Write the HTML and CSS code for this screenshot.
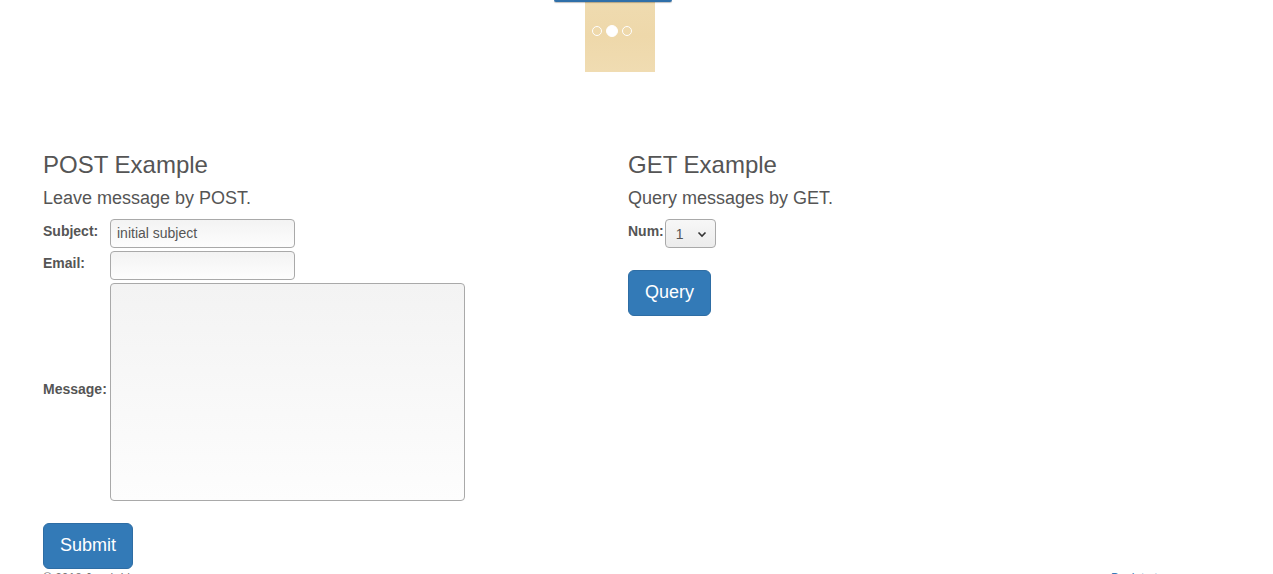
FILE: index.html
```html
<!DOCTYPE html>
<html>
<head>
<meta charset="utf-8">
<link rel="stylesheet" href="styles.css">
</head>
<body>
<div class="hero">
  <div class="hero-btn"></div>
  <div class="slide">
    <ol class="dots">
      <li class="dot"></li>
      <li class="dot active"></li>
      <li class="dot"></li>
    </ol>
  </div>
</div>
<div class="container">
  <div class="col">
    <h3 class="title">POST Example</h3>
    <p class="lead">Leave message by POST.</p>
    <form class="form-grid">
      <label class="lbl">Subject:</label>
      <input class="field field-sm" type="text" value="initial subject">
      <label class="lbl">Email:</label>
      <input class="field field-sm" type="text">
      <label class="lbl">Message:</label>
      <textarea class="field field-area"></textarea>
    </form>
    <button class="btn">Submit</button>
  </div>
  <div class="col">
    <h3 class="title">GET Example</h3>
    <p class="lead">Query messages by GET.</p>
    <div class="num-row">
      <label class="lbl">Num:</label>
      <div class="select-wrap">
        <select class="select"><option>1</option><option>2</option><option>3</option></select>
        <svg class="chev" width="10" height="7" viewBox="0 0 10 7"><path d="M1.5 1.5 L5 5 L8.5 1.5" fill="none" stroke="#333" stroke-width="1.6"/></svg>
      </div>
    </div>
    <button class="btn btn-query">Query</button>
  </div>
</div>
<footer class="footer">
  <span class="copy">© 2018 Jacob Lin</span>
  <a class="top-link">Back to top</a>
</footer>
</body>
</html>
```
FILE: styles.css
```css
* { box-sizing: border-box; }
html, body { margin: 0; padding: 0; }
body {
  font-family: "Liberation Sans", Arial, sans-serif;
  font-size: 14px;
  line-height: 1.42857;
  color: #555;
  background: #fff;
  overflow: hidden;
}
.hero {
  position: relative;
  height: 72px;
  padding-left: 585px;
}
.hero-btn {
  position: absolute;
  left: 554px;
  top: 0;
  width: 118px;
  height: 2px;
  background: #2f6fa9;
  border-radius: 0 0 3px 3px;
  box-shadow: 0 1px 1px rgba(0,0,0,0.25);
  z-index: 2;
}
.slide {
  position: relative;
  width: 70px;
  height: 72px;
  background: linear-gradient(180deg, #efdbb0 0%, #eed8aa 50%, #f0dcb2 100%);
}
.dots {
  position: absolute;
  left: 7px;
  top: 25px;
  margin: 0;
  padding: 0;
  list-style: none;
  display: flex;
  align-items: center;
  gap: 4px;
}
.dot {
  width: 10px;
  height: 10px;
  border: 1px solid #fff;
  border-radius: 50%;
}
.dot.active {
  width: 12px;
  height: 12px;
  background: #fff;
}
.container {
  display: flex;
  padding-left: 43px;
  margin-top: 80px;
}
.col {
  width: 585px;
}
.title {
  margin: 0 0 10px;
  font-size: 24px;
  font-weight: 500;
  line-height: 1.1;
}
.lead {
  margin: 0 0 9px;
  font-size: 18px;
  line-height: 1.2;
}
.form-grid {
  display: grid;
  grid-template-columns: 67px auto;
  row-gap: 3px;
  align-items: center;
  justify-items: start;
  margin: 0;
}
.lbl {
  font-weight: bold;
  margin-bottom: 3px;
  white-space: nowrap;
}
.field {
  font-family: "Liberation Sans", Arial, sans-serif;
  font-size: 14px;
  color: #555;
  border: 1px solid #a9a9a9;
  border-radius: 4px;
  background: linear-gradient(180deg, #f3f3f3 0%, #fdfdfd 100%);
  padding: 4px 6px;
  margin: 0;
  outline: none;
}
.field-sm {
  width: 185px;
  height: 29px;
}
.field-area {
  width: 355px;
  height: 218px;
  resize: none;
  display: block;
}
.btn {
  display: block;
  margin-top: 22px;
  font-family: "Liberation Sans", Arial, sans-serif;
  font-size: 18px;
  line-height: 1.3333;
  padding: 10px 16px;
  height: 46px;
  color: #fff;
  background: #337ab7;
  border: 1px solid #2e6da4;
  border-radius: 6px;
}
.btn-query {
  margin-top: 22px;
}
.num-row {
  display: flex;
  align-items: center;
  gap: 1px;
}
.select-wrap {
  position: relative;
  width: 51px;
  height: 29px;
}
.select {
  -webkit-appearance: none;
  appearance: none;
  width: 51px;
  height: 29px;
  font-family: "Liberation Sans", Arial, sans-serif;
  font-size: 14px;
  color: #555;
  padding: 2px 0 0 10px;
  border: 1px solid #a9a9a9;
  border-radius: 4px;
  background: linear-gradient(180deg, #f7f7f7 0%, #ececec 100%);
  outline: none;
}
.chev {
  position: absolute;
  right: 9px;
  top: 12px;
  pointer-events: none;
}
.footer {
  display: flex;
  justify-content: space-between;
  padding: 1px 102px 0 43px;
  font-size: 12px;
  line-height: 16px;
}
.copy { color: #777; }
.top-link { color: #337ab7; }
```
